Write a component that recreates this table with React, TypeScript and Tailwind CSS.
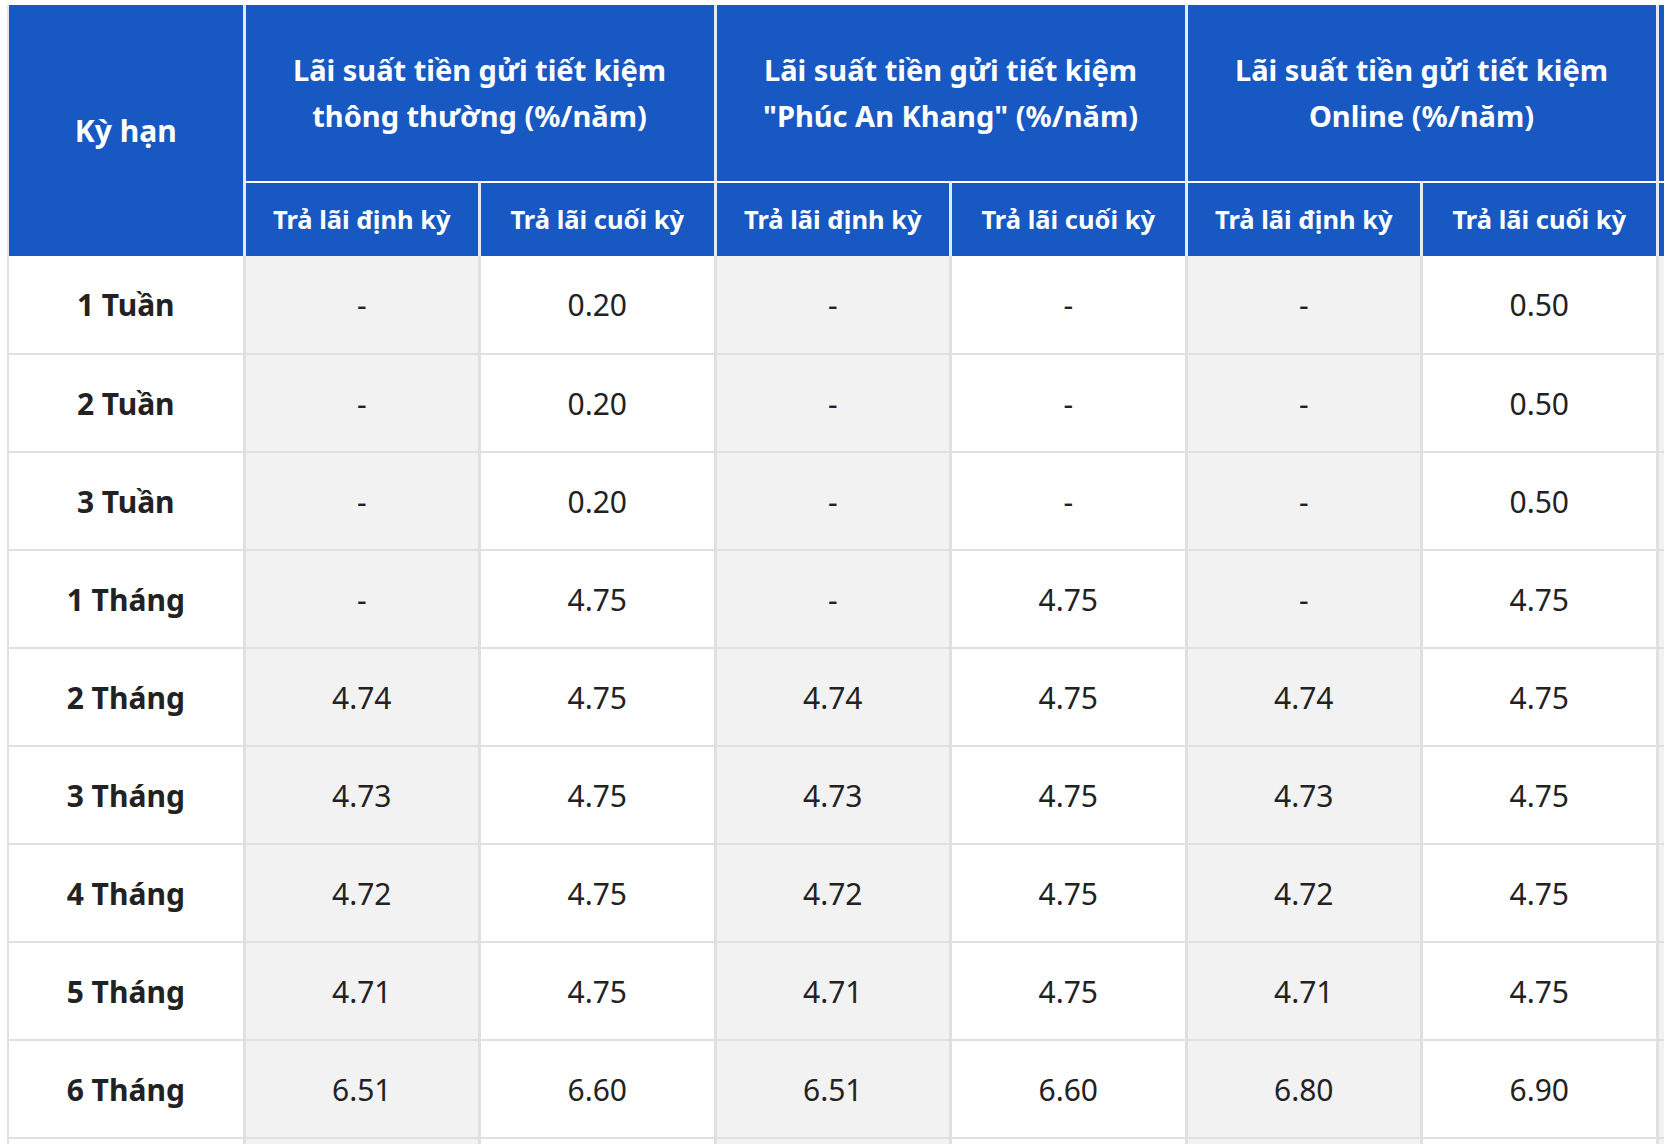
import React from 'react';

type Row = { term: string; values: string[] };

const groups = [
    ['Lãi suất tiền gửi tiết kiệm', 'thông thường (%/năm)'],
    ['Lãi suất tiền gửi tiết kiệm', '"Phúc An Khang" (%/năm)'],
    ['Lãi suất tiền gửi tiết kiệm', 'Online (%/năm)'],
];

const rows: Row[] = [
    { term: '1 Tuần', values: ['-', '0.20', '-', '-', '-', '0.50'] },
    { term: '2 Tuần', values: ['-', '0.20', '-', '-', '-', '0.50'] },
    { term: '3 Tuần', values: ['-', '0.20', '-', '-', '-', '0.50'] },
    { term: '1 Tháng', values: ['-', '4.75', '-', '4.75', '-', '4.75'] },
    { term: '2 Tháng', values: ['4.74', '4.75', '4.74', '4.75', '4.74', '4.75'] },
    { term: '3 Tháng', values: ['4.73', '4.75', '4.73', '4.75', '4.73', '4.75'] },
    { term: '4 Tháng', values: ['4.72', '4.75', '4.72', '4.75', '4.72', '4.75'] },
    { term: '5 Tháng', values: ['4.71', '4.75', '4.71', '4.75', '4.71', '4.75'] },
    { term: '6 Tháng', values: ['6.51', '6.60', '6.51', '6.60', '6.80', '6.90'] },
    { term: '', values: ['', '', '', '', '', ''] },
];

const head = 'bg-[#1758c3] text-white font-bold border-x-[3px] border-[#e4eaf4]';

export default function App() {
    return (
        <div className="w-[1664px] h-[1144px] overflow-hidden bg-white pl-[7px] pt-[5px] font-['Noto_Sans',sans-serif] text-[#222222]">
            <table className="table-fixed border-collapse w-[1680px]">
                <colgroup>
                    <col className="w-[236px]" />
                    {Array.from({ length: 6 }).map((_, i) => (
                        <col key={i} className="w-[235.5px]" />
                    ))}
                    <col className="w-[31px]" />
                </colgroup>
                <thead>
                    <tr className="h-[177px]">
                        <th rowSpan={2} className={`${head} text-[30px] border-l-2 border-l-[#e6e6e6]`}>
                            Kỳ hạn
                        </th>
                        {groups.map((g, i) => (
                            <th
                                key={i}
                                colSpan={2}
                                className={`${head} text-[29px] leading-[46px] border-b-2 border-b-white`}
                            >
                                {g[0]}
                                <br />
                                {g[1]}
                            </th>
                        ))}
                        <th className={`${head} border-b-2 border-b-white`} />
                    </tr>
                    <tr className="h-[74px]">
                        {Array.from({ length: 6 }).map((_, i) => (
                            <th key={i} className={`${head} text-[25.5px]`}>
                                {i % 2 === 0 ? 'Trả lãi định kỳ' : 'Trả lãi cuối kỳ'}
                            </th>
                        ))}
                        <th className={head} />
                    </tr>
                </thead>
                <tbody>
                    {rows.map((r, ri) => (
                        <tr key={ri} className="h-[98px]">
                            <td className="text-center text-[30px] font-bold border-r-[3px] border-l-2 border-b-2 border-[#e0e0e0]">
                                {r.term}
                            </td>
                            {r.values.map((v, i) => (
                                <td
                                    key={i}
                                    className={
                                        i % 2 === 0
                                            ? 'bg-[#f2f2f2] text-center text-[30px] border-x-[3px] border-b-2 border-[#e0e0e0]'
                                            : 'bg-white text-center text-[30px] border-x-[3px] border-b-2 border-[#e0e0e0]'
                                    }
                                >
                                    {v}
                                </td>
                            ))}
                            <td className="bg-[#f2f2f2] border-x-[3px] border-b-2 border-[#e0e0e0]" />
                        </tr>
                    ))}
                </tbody>
            </table>
        </div>
    );
}
